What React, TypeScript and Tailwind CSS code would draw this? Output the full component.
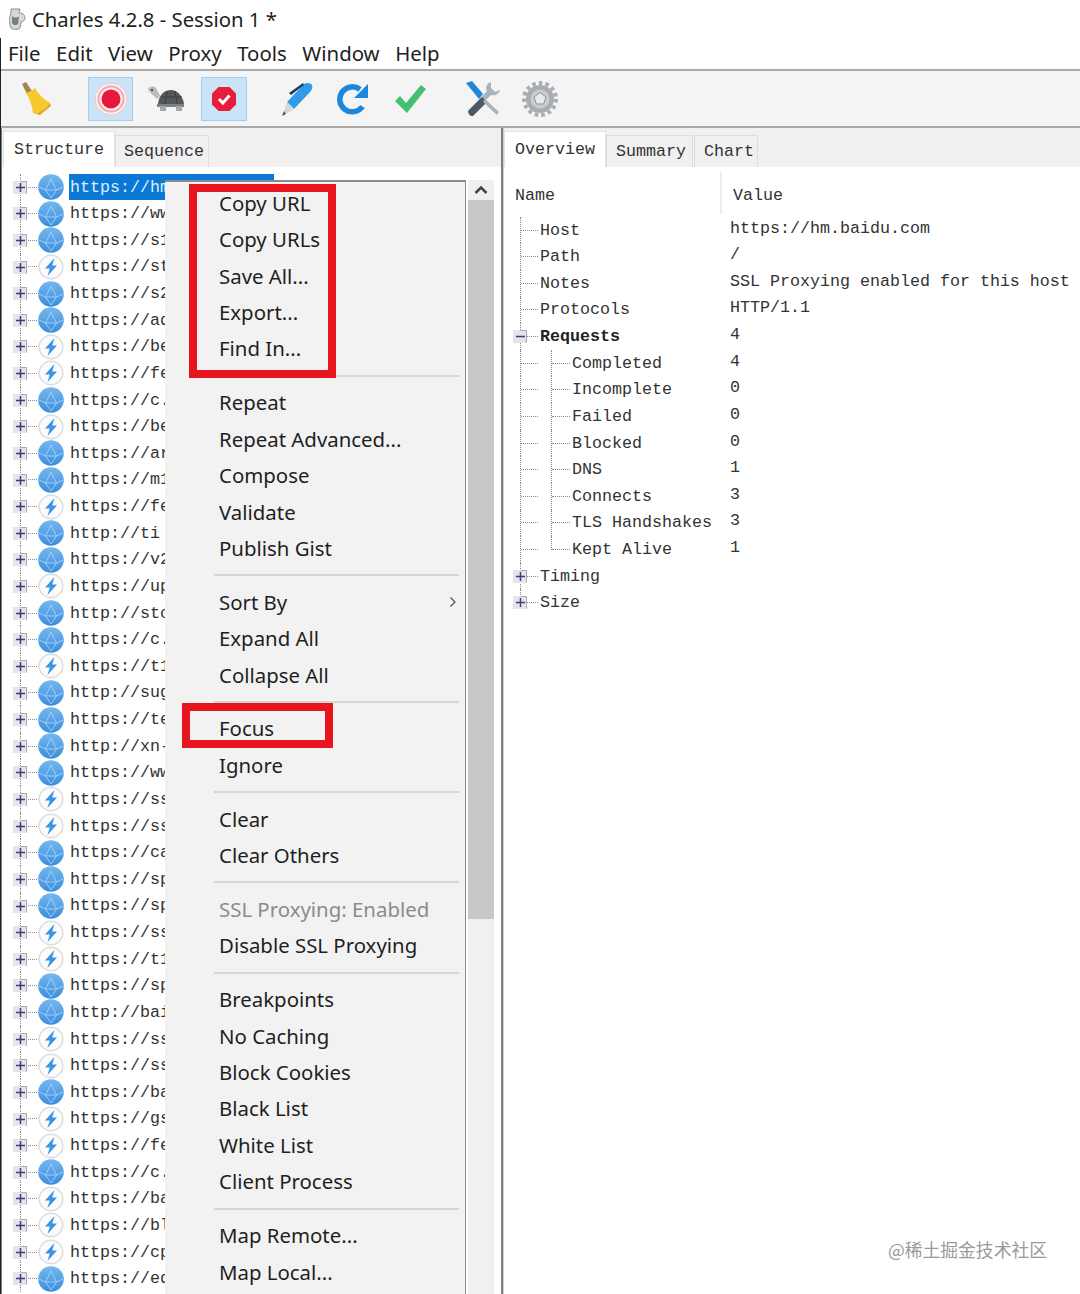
const uiFont = "font-['Noto_Sans','Open_Sans',sans-serif]";
const monoFont = "font-['Liberation_Mono',monospace]";

type Kind = "globe" | "bolt";

const hosts: [string, Kind][] = [
  ["https://hm.baidu.com", "globe"],
  ["https://www", "globe"],
  ["https://s1", "globe"],
  ["https://st", "bolt"],
  ["https://s2", "globe"],
  ["https://ad", "globe"],
  ["https://be", "bolt"],
  ["https://fe", "bolt"],
  ["https://c.", "globe"],
  ["https://be", "bolt"],
  ["https://ar", "globe"],
  ["https://m1", "globe"],
  ["https://fe", "bolt"],
  ["http://ti", "globe"],
  ["https://v2", "globe"],
  ["https://up", "bolt"],
  ["http://sto", "globe"],
  ["https://c.", "globe"],
  ["https://t1", "bolt"],
  ["http://sug", "globe"],
  ["https://te", "globe"],
  ["http://xn-", "globe"],
  ["https://ww", "globe"],
  ["https://ss", "bolt"],
  ["https://ss", "bolt"],
  ["https://ca", "globe"],
  ["https://sp", "globe"],
  ["https://sp", "globe"],
  ["https://ss", "bolt"],
  ["https://t1", "bolt"],
  ["https://sp", "globe"],
  ["http://bai", "globe"],
  ["https://ss", "bolt"],
  ["https://ss", "bolt"],
  ["https://ba", "globe"],
  ["https://gs", "bolt"],
  ["https://fe", "bolt"],
  ["https://c.", "globe"],
  ["https://ba", "bolt"],
  ["https://bl", "bolt"],
  ["https://cp", "bolt"],
  ["https://ed", "globe"],
];

type Entry = { label: string } | "sep";

const menu: Entry[] = [
  { label: "Copy URL" },
  { label: "Copy URLs" },
  { label: "Save All..." },
  { label: "Export..." },
  { label: "Find In..." },
  "sep",
  { label: "Repeat" },
  { label: "Repeat Advanced..." },
  { label: "Compose" },
  { label: "Validate" },
  { label: "Publish Gist" },
  "sep",
  { label: "Sort By" },
  { label: "Expand All" },
  { label: "Collapse All" },
  "sep",
  { label: "Focus" },
  { label: "Ignore" },
  "sep",
  { label: "Clear" },
  { label: "Clear Others" },
  "sep",
  { label: "SSL Proxying: Enabled" },
  { label: "Disable SSL Proxying" },
  "sep",
  { label: "Breakpoints" },
  { label: "No Caching" },
  { label: "Block Cookies" },
  { label: "Black List" },
  { label: "White List" },
  { label: "Client Process" },
  "sep",
  { label: "Map Remote..." },
  { label: "Map Local..." },
];

const overview: { name: string; value?: string; level: 0 | 1; kind?: "open" | "closed"; bold?: boolean; last?: boolean }[] = [
  { name: "Host", value: "https://hm.baidu.com", level: 0 },
  { name: "Path", value: "/", level: 0 },
  { name: "Notes", value: "SSL Proxying enabled for this host", level: 0 },
  { name: "Protocols", value: "HTTP/1.1", level: 0 },
  { name: "Requests", value: "4", level: 0, kind: "open", bold: true },
  { name: "Completed", value: "4", level: 1 },
  { name: "Incomplete", value: "0", level: 1 },
  { name: "Failed", value: "0", level: 1 },
  { name: "Blocked", value: "0", level: 1 },
  { name: "DNS", value: "1", level: 1 },
  { name: "Connects", value: "3", level: 1 },
  { name: "TLS Handshakes", value: "3", level: 1 },
  { name: "Kept Alive", value: "1", level: 1, last: true },
  { name: "Timing", level: 0, kind: "closed" },
  { name: "Size", level: 0, kind: "closed" },
];

function Expander({ open = false }: { open?: boolean }) {
  return (
    <svg width="15" height="15" viewBox="0 0 15 15" className="block">
      <rect x="0" y="1" width="14" height="13" fill="#e4e4ec" />
      <path d="M7.500 1.500h6v12" fill="none" stroke="#a8a8b4" />
      <path d="M3 7.500h9" stroke="#3d3d78" strokeWidth="1.500" />
      {!open && <path d="M7.500 3v9" stroke="#3d3d78" strokeWidth="1.500" />}
    </svg>
  );
}

function Globe() {
  return (
    <svg width="26" height="26" viewBox="0 0 26 26" className="flex-none">
      <defs>
        <linearGradient id="globeFill" x1="0" y1="0" x2="0" y2="1">
          <stop offset="0" stopColor="#74b8ef" />
          <stop offset="1" stopColor="#3a8ddd" />
        </linearGradient>
      </defs>
      <circle cx="13" cy="13" r="12.800" fill="url(#globeFill)" />
      <path d="M13 5 7.500 16h11zM1 13l6.500 3M25 13l-6.500 3M7.500 16 13 24l5.500-8" fill="none" stroke="#a9d2f5" strokeWidth="0.900" />
    </svg>
  );
}

function Bolt() {
  return (
    <svg width="26" height="26" viewBox="0 0 26 26" className="flex-none">
      <circle cx="13" cy="13" r="11.800" fill="#fbfbfb" stroke="#dcdcdc" strokeWidth="1.500" />
      <path d="M16.500 4 7 14.500h4.800L9.500 22l9.500-10.500h-4.800z" fill="#3b93e4" />
    </svg>
  );
}

function HostIcon({ kind }: { kind: Kind }) {
  return kind === "globe" ? <Globe /> : <Bolt />;
}

function HostRow({ url, kind, selected }: { url: string; kind: Kind; selected?: boolean }) {
  return (
    <div className="flex h-[26.63px] items-center">
      <div className="relative flex h-full w-[24px] flex-none items-center pl-[18px]">
        <span className="h-full border-l border-dotted border-[#8a8a8a]" />
        <span className="absolute left-[11px] top-[6px]">
          <Expander />
        </span>
      </div>
      <span className="mr-[1px] w-[11px] flex-none border-t border-dotted border-[#8a8a8a]" />
      <HostIcon kind={kind} />
      <span
        className={`ml-[5px] flex h-full items-center whitespace-nowrap pl-[1px] pr-[4px] text-[16.670px] ${monoFont} ${
          selected ? "bg-[#0a78d4] text-[#dcefff]" : "text-[#333333]"
        }`}
      >
        {url}
      </span>
    </div>
  );
}

function Tab({ label, active, className = "" }: { label: string; active?: boolean; className?: string }) {
  return (
    <div
      className={`flex items-center border border-b-0 text-[16.670px] text-[#333333] ${monoFont} ${
        active ? "h-[36px] border-[#e4e4e4] bg-white" : "mt-[4px] h-[32px] border-[#dddddd] bg-[#f0f0f0]"
      } ${className}`}
    >
      {label}
    </div>
  );
}

function OverviewRow({ row }: { row: (typeof overview)[number] }) {
  return (
    <div className={`flex h-[26.63px] items-center text-[16.670px] text-[#333333] ${monoFont}`}>
      <div className="flex h-full w-[226px] flex-none items-stretch pl-[16px]">
        <div className="relative flex w-[18px] flex-none items-center">
          <span
            className={`border-l border-dotted border-[#8a8a8a] ${row.name === "Size" ? "h-1/2 self-start" : "h-full"}`}
          />
          <span className="flex-1 border-t border-dotted border-[#8a8a8a]" />
          {row.kind && (
            <span className="absolute left-[-7px] top-[6px]">
              <Expander open={row.kind === "open"} />
            </span>
          )}
        </div>
        {row.level === 1 && (
          <div className="ml-[13px] flex w-[19px] flex-none items-center">
            <span className={`border-l border-dotted border-[#8a8a8a] ${row.last ? "h-1/2 self-start" : "h-full"}`} />
            <span className="flex-1 border-t border-dotted border-[#8a8a8a]" />
          </div>
        )}
        <span className={`ml-[2px] self-center whitespace-nowrap ${row.bold ? "font-bold text-[#222222]" : ""}`}>
          {row.name}
        </span>
      </div>
      <span className="-translate-y-[2px] whitespace-nowrap">{row.value}</span>
    </div>
  );
}

function ContextMenu() {
  return (
    <div
      className={`absolute bottom-0 left-[163px] top-[52px] w-[301px] border-r border-t-2 border-[#8c8c8c] bg-[#f2f2f2] pt-[3px] text-[20.400px] text-[#1f1f1f] ${uiFont}`}
    >
      {menu.map((item, i) =>
        item === "sep" ? (
          <div key={i} className="flex h-[17.500px] items-center pl-[49px] pr-[6px]">
            <div className="h-[2px] w-full bg-[#d6d6d6]" />
          </div>
        ) : (
          <div key={i} className="flex h-[36.400px] items-center justify-between pl-[54px] pr-[8px]">
            <span className={`whitespace-nowrap ${item.label.startsWith("SSL") ? "text-[#8b8b8b]" : ""}`}>
              {item.label}
            </span>
            {item.label === "Sort By" && (
              <svg width="8" height="12" viewBox="0 0 8 12">
                <path d="M1.500 1.500 6 6l-4.500 4.500" fill="none" stroke="#555555" strokeWidth="1.300" />
              </svg>
            )}
          </div>
        ),
      )}
      <div className="absolute left-[24px] top-[2px] h-[194px] w-[147px] border-[8px] border-[#e8141f]" />
      <div className="absolute left-[17px] top-[521px] h-[45px] w-[151px] border-[8px] border-[#e8141f]" />
    </div>
  );
}

function ToolbarIcons() {
  return (
    <div className="flex h-[55px] items-center pl-[18px]">
      <svg width="34" height="34" viewBox="0 0 34 34" className="flex-none">
        <path d="M3 2 7 0l6 9-5 3z" fill="#a9854c" />
        <path d="M7 11c4-1 7-3 9-5 3 6 8 11 15 15l-2 2-12 9-3-1C13 24 11 17 7 11z" fill="#f6c92f" />
        <path d="M17 32c3-2 9-6 12-9l2-2 1 3-11 9z" fill="#e6a91a" />
      </svg>
      <div className="ml-[35px] flex h-[44px] w-[45px] flex-none items-center justify-center border border-[#a6cdec] bg-[#cbe3f7]">
        <svg width="34" height="34" viewBox="0 0 34 34">
          <circle cx="17" cy="17" r="16" fill="#fbeeee" stroke="#eecaca" />
          <circle cx="17" cy="17" r="13.500" fill="#f4a9ab" />
          <circle cx="17" cy="17" r="11.500" fill="#fdf0f0" />
          <circle cx="17" cy="17" r="9.500" fill="#e8173f" />
        </svg>
      </div>
      <svg width="38" height="26" viewBox="0 0 38 26" className="ml-[14px] flex-none">
        <path d="M11 18C12 8 18 4 24 4s12 6 13 14z" fill="#55585a" />
        <path d="M1 3c2-3 6-3 8-1 1 2 3 5 4 8l-3 3C7 9 3 8 1 3z" fill="#b8bbbb" />
        <circle cx="5" cy="4" r="1" fill="#222222" />
        <path d="M10 18h27v3H10z" fill="#7b7f80" />
        <path d="M13 20h6v5h-6zM29 20h6v5h-6z" fill="#a6a9aa" />
        <path d="M20 5l-2 13M28 5l2 13M14 11h21" stroke="#3c3e40" fill="none" />
      </svg>
      <div className="ml-[16px] flex h-[44px] w-[46px] flex-none items-center justify-center border border-[#a6cdec] bg-[#cbe3f7]">
        <svg width="26" height="26" viewBox="0 0 26 26">
          <path d="M7.500 1h11L25 7.500v11L18.500 25h-11L1 18.500v-11z" fill="#e61e3a" />
          <path d="m8 13 3.800 4L18.500 9.500" fill="none" stroke="#ffffff" strokeWidth="3" />
        </svg>
      </div>
      <svg width="36" height="36" viewBox="0 0 36 36" className="ml-[33px] flex-none">
        <path d="M24 3c3-2 7-1 8 1 1 2 0 5-2 7L14 28l-7-7z" fill="#2f9be9" />
        <path d="M9 12 23 2l1 2L11 14z" fill="#1c3b55" />
        <path d="M7 21l7 7-8 5-2-3z" fill="#d4d8dc" />
        <path d="M4 30l2 3-4 2z" fill="#4d5257" />
      </svg>
      <svg width="34" height="34" viewBox="0 0 34 34" className="ml-[21px] flex-none">
        <path d="M25.500 24.500A12.500 12.500 0 1 1 23 7.500" fill="none" stroke="#1b87dd" strokeWidth="5.500" />
        <path d="M31 2v14H17z" fill="#1b87dd" />
      </svg>
      <svg width="34" height="30" viewBox="0 0 34 30" className="ml-[22px] flex-none">
        <path d="M2 17l5-5 6 7L28 1l5 4-19 24z" fill="#46c06f" />
      </svg>
      <svg width="37" height="37" viewBox="0 0 37 37" className="ml-[38px] flex-none">
        <path d="M26 2c-4 1-6 5-4 9L4 30l3 3 19-18c4 1 8-1 9-5l-5 2-4-4z" fill="#a8b2ba" />
        <path d="M1 3l6-2 11 13-4 5z" fill="#1d87dc" />
        <path d="M17 17l5 5-14 14c-2 1-5-2-5-5z" fill="#4e5963" />
        <path d="M20 19l14 13-2 3-14-13z" fill="#a8b2ba" />
      </svg>
      <svg width="36" height="36" viewBox="0 0 36 36" className="ml-[20px] flex-none">
        <circle cx="18" cy="18" r="14" fill="#a9adb3" />
        <circle cx="18" cy="18" r="16" fill="none" stroke="#a9adb3" strokeWidth="4" strokeDasharray="3.600 3.100" />
        <circle cx="18" cy="18" r="9.500" fill="#c9ccd0" />
        <path d="M18 11.500l6 4.500-2.300 7h-7.400L12 16z" fill="#e8e8e8" stroke="#8f9399" />
      </svg>
    </div>
  );
}

export default function App() {
  return (
    <div className="relative flex h-[1294px] w-[1080px] flex-col overflow-hidden bg-white">
      <div className={`flex h-[38px] flex-none items-center pl-[6px] text-[20.300px] text-[#222222] ${uiFont}`}>
        <svg width="20" height="24" viewBox="0 0 20 24" className="mr-[6px] flex-none">
          <path d="M5 2h9l-1 4c5 0 6 3 6 5s-2 4-4 4l-1 6c-2 2-7 2-9 0-2-5-2-10 0-15z" fill="#d8d8d4" stroke="#8d8d88" />
          <path d="M6 9c2 2 6 2 7 0l-1 8c-2 2-5 1-6-1z" fill="#6f8379" />
        </svg>
        Charles 4.2.8 - Session 1 *
      </div>

      <div className="flex min-h-0 flex-1 flex-col border-l border-[#222222]">
        <div className={`flex h-[31px] flex-none items-center gap-[15.500px] pl-[7px] text-[20.400px] text-[#222222] ${uiFont}`}>
          <span>File</span>
          <span>Edit</span>
          <span>View</span>
          <span>Proxy</span>
          <span>Tools</span>
          <span>Window</span>
          <span>Help</span>
        </div>
        <div className="flex-none border-y-2 border-[#a9a9a9] bg-[#f4f4f4]">
          <ToolbarIcons />
        </div>

        <div className="flex min-h-0 flex-1">
          <div className="relative flex w-[502px] flex-none flex-col overflow-hidden border-l border-r-2 border-[#7f7f7f] bg-white">
            <div className="flex h-[39px] flex-none items-end bg-[#f0f0f0] pl-[1px] pt-[3px]">
              <Tab label="Structure" active className="w-[112px] pl-[10px]" />
              <Tab label="Sequence" className="w-[94px] pl-[8px]" />
            </div>
            <div className="min-h-0 flex-1 pt-[6.700px]">
              {hosts.map(([url, kind], i) => (
                <HostRow key={i} url={url} kind={kind} selected={i === 0} />
              ))}
            </div>
            <ContextMenu />
            <div className="absolute bottom-0 left-[466px] top-[52px] flex w-[26px] flex-col bg-[#f0f0f0]">
              <div className="flex h-[20px] flex-none items-center justify-center">
                <svg width="14" height="10" viewBox="0 0 14 10">
                  <path d="M1.500 8 7 2.500 12.500 8" fill="none" stroke="#444444" strokeWidth="2.500" />
                </svg>
              </div>
              <div className="h-[719px] flex-none bg-[#c8c8c8]" />
            </div>
          </div>

          <div className="flex min-w-0 flex-1 flex-col border-l border-[#cfcfcf]">
            <div className="flex h-[39px] flex-none items-end bg-[#f0f0f0] pt-[3px]">
              <Tab label="Overview" active className="w-[102px] pl-[10px]" />
              <Tab label="Summary" className="w-[87px] pl-[9px]" />
              <Tab label="Chart" className="ml-[1px] w-[64px] pl-[9px]" />
            </div>
            <div className="flex h-[47px] flex-none pt-[5px] text-[16.670px] text-[#333333]">
              <div className={`flex h-full w-[218px] flex-none items-center border-r-2 border-[#ececec] pl-[11px] pt-[4px] ${monoFont}`}>Name</div>
              <div className={`flex h-full items-center pl-[11px] pt-[4px] ${monoFont}`}>Value</div>
            </div>
            <div className="pt-[2.700px]">
              {overview.map((row) => (
                <OverviewRow key={row.name} row={row} />
              ))}
            </div>
          </div>
        </div>
      </div>

      <div className="absolute bottom-[31px] right-[33px] font-['Noto_Sans_CJK_SC',sans-serif] text-[17.800px] text-[#9a9a9a]">
        @稀土掘金技术社区
      </div>
    </div>
  );
}
